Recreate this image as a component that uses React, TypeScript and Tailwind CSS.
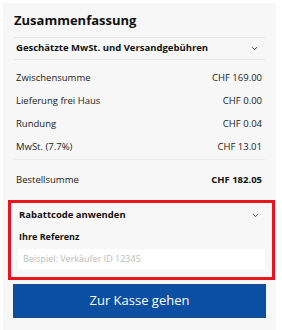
import { ChevronDown } from 'lucide-react'

const rows = [
  { label: 'Zwischensumme', value: 'CHF 169.00' },
  { label: 'Lieferung frei Haus', value: 'CHF 0.00' },
  { label: 'Rundung', value: 'CHF 0.04' },
  { label: 'MwSt. (7.7%)', value: 'CHF 13.01' },
]

export default function App() {
  return (
    <div className="h-[330px] w-[282px] bg-white pl-[3px] pr-[6px] pt-[3px] font-['Open_Sans',sans-serif] text-[#222]">
      <div className="h-full bg-[#f7f7f7] pt-[7px]">
        <div className="px-[11px]">
          <h2 className="h-[27px] text-[13px] font-bold leading-[20px] text-[#111]">Zusammenfassung</h2>
          <div className="flex h-[23px] items-center justify-between border-y border-[#e6e6e6] pl-[2px] pr-[6px]">
            <span className="text-[9.5px] font-bold text-[#111]">Geschätzte MwSt. und Versandgebühren</span>
            <ChevronDown className="h-[9px] w-[9px] text-[#444]" strokeWidth={2.5} />
          </div>
          <div className="flex flex-col border-b border-[#ececec] pt-[7px]">
            {rows.map((r) => (
              <div key={r.label} className="flex h-[23px] items-center justify-between pl-[2px] pr-[3px] text-[9.5px]">
                <span>{r.label}</span>
                <span>{r.value}</span>
              </div>
            ))}
          </div>
          <div className="flex h-[40px] items-center justify-between pl-[2px] pr-[3px] text-[9.5px]">
            <span>Bestellsumme</span>
            <span className="font-bold text-[#111]">CHF 182.05</span>
          </div>
        </div>
        <div className="ml-[5px] mr-[1px] h-[80px] border-[3px] border-[#e8141e] px-[7px]">
          <div className="flex h-[22px] items-center justify-between pl-[1px] pr-[5px] pt-[2px]">
            <span className="text-[9.5px] font-bold text-[#111]">Rabattcode anwenden</span>
            <ChevronDown className="h-[9px] w-[9px] text-[#444]" strokeWidth={2.5} />
          </div>
          <div className="pt-[5px] pl-[1px] text-[9px] font-bold leading-[14px] text-[#111]">Ihre Referenz</div>
          <input
            className="mt-[2px] h-[20px] w-full bg-white px-[5px] text-[9px] text-[#222] outline-none placeholder:text-[#bdbdbd]"
            placeholder="Beispiel: Verkäufer ID 12345"
          />
        </div>
        <div className="px-[10px] pt-[4px]">
          <button className="flex h-[34px] w-full items-center justify-center border border-[#1b4a86] bg-[#0a4fa2] text-[13px] text-white">
            Zur Kasse gehen
          </button>
        </div>
      </div>
    </div>
  )
}
